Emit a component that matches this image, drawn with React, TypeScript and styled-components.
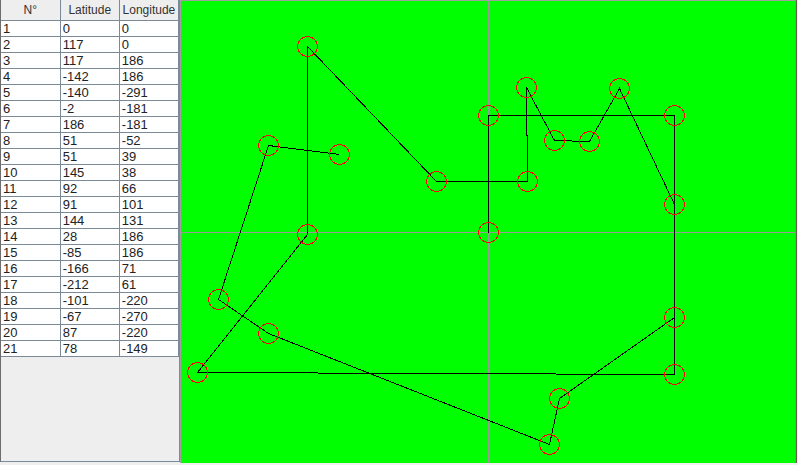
import React from "react";
import styled, { createGlobalStyle } from "styled-components";

const Global = createGlobalStyle`
  html, body { margin: 0; padding: 0; background: #eeeeee; }
  body { font-family: "Liberation Sans", Arial, sans-serif; }
`;

const points: [number, number][] = [
  [0, 0], [117, 0], [117, 186], [-142, 186], [-140, -291], [-2, -181],
  [186, -181], [51, -52], [51, 39], [145, 38], [92, 66], [91, 101],
  [144, 131], [28, 186], [-85, 186], [-166, 71], [-212, 61], [-101, -220],
  [-67, -270], [87, -220], [78, -149],
];

const Frame = styled.div`
  display: flex;
  width: 798px;
  height: 465px;
  overflow: hidden;
  background: #eeeeee;
`;

const TablePane = styled.div`
  width: 178px;
  height: 461px;
  border-left: 1px solid #6d6d6d;
  border-right: 1px solid #7a8a99;
  border-bottom: 1px solid #7a8a99;
  background: #eeeeee;
`;

const Grid = styled.table`
  border-collapse: collapse;
  table-layout: fixed;
  width: 178px;
  font-family: "Liberation Sans", Arial, sans-serif;
`;

const HeadCell = styled.th`
  height: 20px;
  padding: 0;
  background: #eeeeee;
  border-right: 1px solid #7a8a99;
  border-bottom: 1px solid #7a8a99;
  font-size: 12px;
  font-weight: normal;
  color: #333333;
  text-align: center;
  white-space: nowrap;
  overflow: hidden;
  line-height: 20px;
`;

const Cell = styled.td`
  height: 15px;
  padding: 0 0 0 2px;
  background: #ffffff;
  border-right: 1px solid #7a8a99;
  border-bottom: 1px solid #7a8a99;
  font-size: 13px;
  line-height: 15px;
  color: #222222;
  white-space: nowrap;
  overflow: hidden;
`;

const CanvasPane = styled.div`
  flex: 1;
  height: 462px;
  border-top: 1px solid #a0a0a0;
  border-left: 1px solid #a0a0a0;
  border-right: 1px solid #8c8c8c;
  box-shadow: 1px 0 0 #6a5a50;
  margin-right: 2px;
  background: #00ff00;
`;

const Plot = styled.svg`
  display: block;
`;

const W = 614;
const H = 462;
const CX = 307;
const CY = 231;

export default function App() {
  const pts = points.map(([lat, lon]) => [CX + lon + 0.5, CY - lat + 0.5]);
  const poly = pts.map((p) => p.join(",")).join(" ");
  return (
    <>
      <Global />
      <Frame>
        <TablePane>
          <Grid>
            <colgroup>
              <col style={{ width: 59 }} />
              <col style={{ width: 59 }} />
              <col style={{ width: 59 }} />
            </colgroup>
            <thead>
              <tr>
                <HeadCell>N°</HeadCell>
                <HeadCell>Latitude</HeadCell>
                <HeadCell>Longitude</HeadCell>
              </tr>
            </thead>
            <tbody>
              {points.map(([lat, lon], i) => (
                <tr key={i}>
                  <Cell>{i + 1}</Cell>
                  <Cell>{lat}</Cell>
                  <Cell>{lon}</Cell>
                </tr>
              ))}
            </tbody>
          </Grid>
        </TablePane>
        <CanvasPane>
          <Plot width={W} height={H} viewBox={`0 0 ${W} ${H}`} shapeRendering="crispEdges">
            <line x1={0} y1={CY + 0.5} x2={W} y2={CY + 0.5} stroke="#9a9a9a" strokeWidth={1} />
            <line x1={CX + 0.5} y1={0} x2={CX + 0.5} y2={H} stroke="#9a9a9a" strokeWidth={1} />
            <polyline points={poly} fill="none" stroke="#000000" strokeWidth={1} />
            {pts.map(([x, y], i) => (
              <circle key={i} cx={x} cy={y} r={10} fill="none" stroke="#ff0000" strokeWidth={1} />
            ))}
          </Plot>
        </CanvasPane>
      </Frame>
    </>
  );
}
